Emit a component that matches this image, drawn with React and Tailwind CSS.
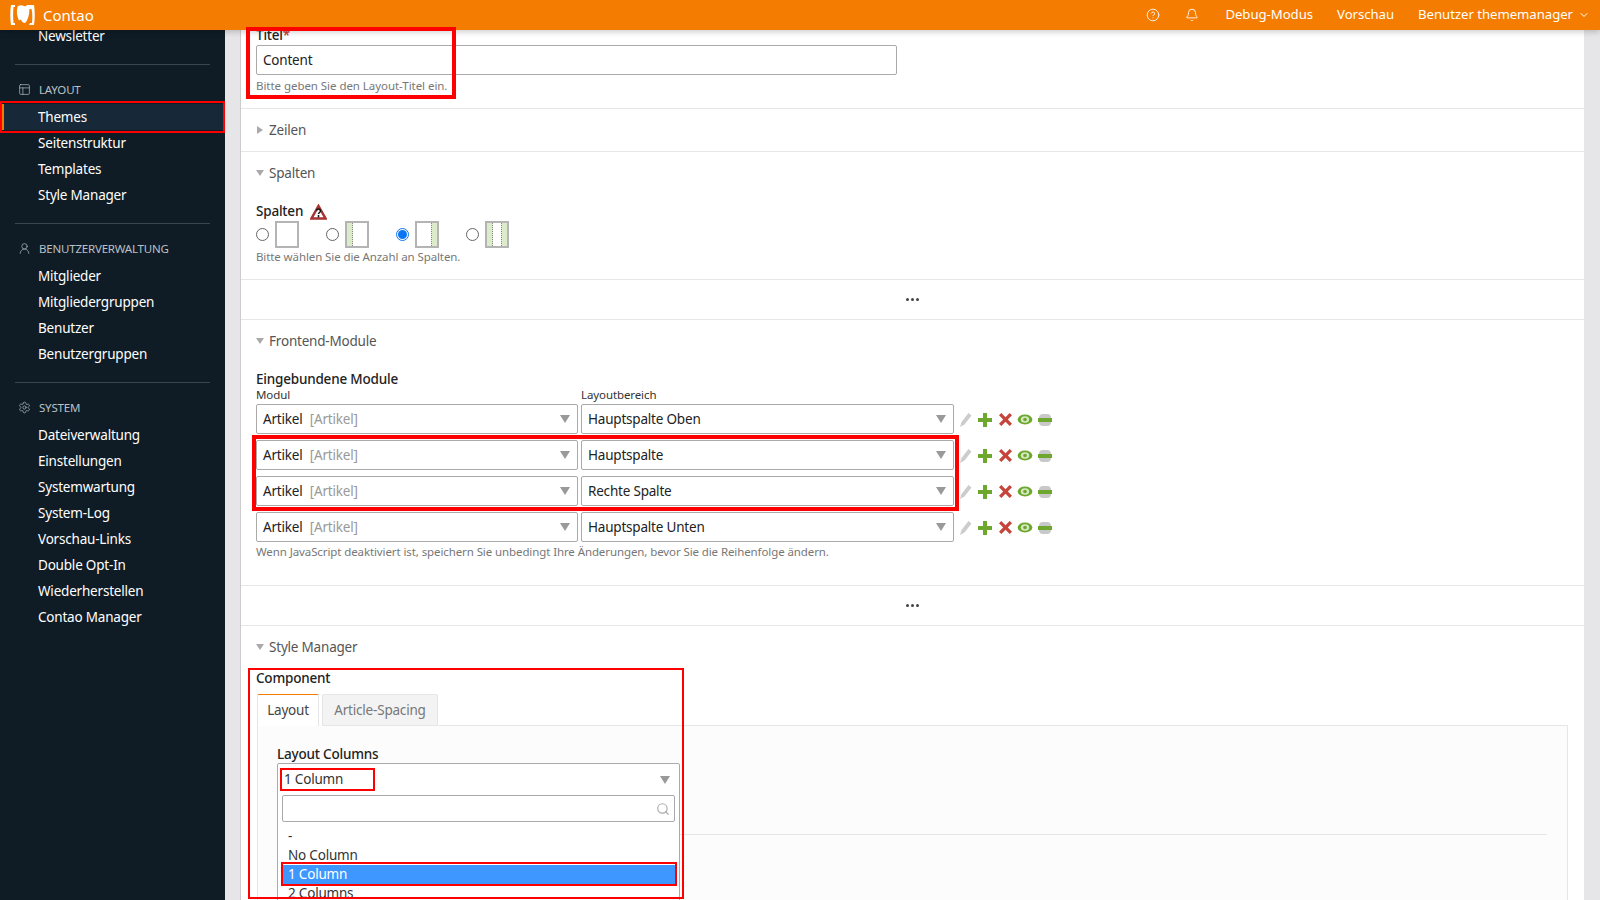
import React from 'react';
import { Bell, ChevronDown, CircleHelp, PanelsTopLeft, Search, Settings, UserRound } from 'lucide-react';

const groups = [
    { title: 'LAYOUT', icon: PanelsTopLeft, items: ['Themes', 'Seitenstruktur', 'Templates', 'Style Manager'] },
    { title: 'BENUTZERVERWALTUNG', icon: UserRound, items: ['Mitglieder', 'Mitgliedergruppen', 'Benutzer', 'Benutzergruppen'] },
    { title: 'SYSTEM', icon: Settings, items: ['Dateiverwaltung', 'Einstellungen', 'Systemwartung', 'System-Log', 'Vorschau-Links', 'Double Opt-In', 'Wiederherstellen', 'Contao Manager'] },
];

const modules = ['Hauptspalte Oben', 'Hauptspalte', 'Rechte Spalte', 'Hauptspalte Unten'];

const Caret = ({ className = '' }) => (
    <svg width="10" height="8" viewBox="0 0 10 8" className={className}>
        <path d="M0 0h10L5 8z" fill="#999" />
    </svg>
);

const Legend = ({ label, open = true }) => (
    <div className="h-[42px] flex items-center gap-[5px] text-[13.500px] text-[#555] pl-[15px]">
        <svg width="8" height="8" viewBox="0 0 8 8">
            {open ? <path d="M0 1h8L4 7z" fill="#aaa" /> : <path d="M1 0v8l6-4z" fill="#aaa" />}
        </svg>
        <span className="pt-[1px]">{label}</span>
    </div>
);

const Dots = () => (
    <div className="h-[40px] border-b border-[#e6e6e8] flex items-center justify-center gap-[2px]">
        <span className="w-[3px] h-[3px] rounded-full bg-[#444]"></span>
        <span className="w-[3px] h-[3px] rounded-full bg-[#444]"></span>
        <span className="w-[3px] h-[3px] rounded-full bg-[#444]"></span>
    </div>
);

const Select = ({ width, children }) => (
    <div className={`${width} h-[30px] border border-[#aaa] rounded-[2px] bg-white flex items-center justify-between pl-[6px] pr-[7px] text-[13.500px] text-[#222]`}>
        <span className="pt-[1px]">{children}</span>
        <Caret />
    </div>
);

const RowIcons = () => (
    <div className="flex items-center ml-[5px] mt-[1px]">
        <svg width="14" height="16" viewBox="0 0 14 16">
            <path d="M1 15l1.500-5 7-9 3 2.500-7 9z" fill="#ccc" />
        </svg>
        <svg width="14" height="14" viewBox="0 0 14 14" className="ml-[5px]">
            <path d="M5 0h4v5h5v4H9v5H5V9H0V5h5z" fill="#6ea72e" />
        </svg>
        <svg width="13" height="13" viewBox="0 0 14 14" className="ml-[7px]">
            <path d="M2.500 0L7 4.500 11.500 0 14 2.500 9.500 7l4.500 4.500L11.500 14 7 9.500 2.500 14 0 11.500 4.500 7 0 2.500z" fill="#c6443a" />
        </svg>
        <svg width="16" height="11" viewBox="0 0 17 12" className="ml-[5px]">
            <ellipse cx="8.500" cy="6" rx="8" ry="5.500" fill="#6ea72e" />
            <ellipse cx="8.500" cy="6" rx="4.500" ry="3.500" fill="#d5e8c0" />
            <circle cx="8.500" cy="6" r="2" fill="#6ea72e" />
        </svg>
        <svg width="14" height="14" viewBox="0 0 14 14" className="ml-[5px]">
            <rect x="1" y="1" width="12" height="12" rx="4" fill="#c8c8c8" />
            <rect x="0" y="5" width="14" height="4" fill="#6ea72e" />
        </svg>
    </div>
);

const ColumnOption = ({ selected, left, right }) => (
    <div className="flex items-center w-[70px]">
        <span className={`w-[13px] h-[13px] rounded-full bg-white flex items-center justify-center border ${selected ? 'border-[#0b76f5]' : 'border-[#666]'}`}>
            {selected && <span className="w-[9px] h-[9px] rounded-full bg-[#0b76f5]"></span>}
        </span>
        <span className="ml-[6px] w-[24px] h-[27px] border-2 border-[#b4b4b4] bg-white flex justify-between">
            <span className={`w-[6px] h-full ${left ? 'bg-[#dcebc9] border-r border-dotted border-[#888]' : ''}`}></span>
            <span className={`w-[6px] h-full ${right ? 'bg-[#dcebc9] border-l border-dotted border-[#888]' : ''}`}></span>
        </span>
    </div>
);

const Overlay = ({ className }) => <div className={`absolute z-30 pointer-events-none border-[#f00] ${className}`}></div>;

const App = () => {
    return (
        <div className="relative h-screen overflow-hidden flex flex-col bg-[#e6e6e8] font-['Noto_Sans',sans-serif] tracking-[-0.2px]">
            <header className="relative z-20 h-[30px] shrink-0 bg-[#f47c00] text-white flex items-center justify-between shadow-[0_2px_6px_rgba(0,0,0,0.2)]">
                <div className="flex items-center pl-[9px]">
                    <svg width="27" height="24" viewBox="0 0 27 24">
                        <path d="M2 2h4v2H4.500c-.500 5-.500 11 0 16H6v2H2C1 16 1 8 2 2z" fill="#fff" />
                        <path d="M9 3c2-1 4-1 6 0 1 .500 2 .500 3-1h2c1 5 0 13-3 17-1 1.500-3 1-4-.500-1-2-2-2-3-1C8 13 7 8 9 3z" fill="#fff" />
                        <path d="M20 2h5c1 6 1 14 0 20h-5l1-2h2c.500-5 .500-10-.500-14H20z" fill="#fff" />
                    </svg>
                    <span className="ml-[7px] text-[15px] tracking-normal">Contao</span>
                </div>
                <div className="flex items-center text-[13.200px] tracking-[-0.05px] pr-[10px]">
                    <CircleHelp size={14} strokeWidth={1.5} />
                    <Bell size={14} strokeWidth={1.5} className="ml-[25px]" />
                    <span className="ml-[26px]">Debug-Modus</span>
                    <span className="ml-[24px]">Vorschau</span>
                    <span className="ml-[24px]">Benutzer thememanager</span>
                    <ChevronDown size={12} className="ml-[5px]" />
                </div>
            </header>

            <div className="flex-1 flex min-h-0 overflow-hidden">
                <aside className="w-[225px] shrink-0 bg-[#0f1c26] text-[13.500px] text-white overflow-hidden">
                    <div className="-mt-[7px] pl-[38px] pt-[1px] h-[26px] flex items-center">Newsletter</div>
                    {groups.map((group) => (
                        <div key={group.title}>
                            <div className="mx-[15px] mt-[15px] border-t border-[#3a454e]"></div>
                            <div className="h-[25px] mt-[12px] flex items-center gap-[8px] pl-[18px] text-[11.500px] text-[#b9c0c6]">
                                <group.icon size={13} strokeWidth={1.25} />
                                <span>{group.title}</span>
                            </div>
                            <ul className="mt-[2px]">
                                {group.items.map((item) => (
                                    <li key={item} className={`h-[26px] flex items-center pt-[1px] pl-[38px] ${item === 'Themes' ? 'bg-[#172838] border-l-[4px] border-[#f47c00] !pl-[34px]' : ''}`}>
                                        {item}
                                    </li>
                                ))}
                            </ul>
                        </div>
                    ))}
                </aside>

                <main className="ml-[15px] w-[1344px] shrink-0 bg-white border-l border-[#ccc] text-[#222] overflow-hidden">
                    <section className="h-[79px] flex flex-col border-b border-[#e6e6e8] px-[15px]">
                        <div className="-mt-[5px] h-[20px] text-[13.500px] leading-[20px] font-medium">Titel<span className="text-[#c33]">*</span></div>
                        <div className="w-[641px] h-[30px] shrink-0 border border-[#aaa] rounded-[2px] flex items-center pt-[1px] px-[6px] text-[13.500px]">Content</div>
                        <p className="mt-[3px] text-[11.500px] leading-[16px] tracking-[-0.05px] text-[#777]">Bitte geben Sie den Layout-Titel ein.</p>
                    </section>

                    <section className="border-b border-[#e6e6e8]">
                        <Legend label="Zeilen" open={false} />
                    </section>

                    <section className="h-[128px] border-b border-[#e6e6e8]">
                        <Legend label="Spalten" />
                        <div className="px-[15px] mt-[7px]">
                            <div className="h-[20px] flex items-center gap-[7px] pt-[1px] text-[13.500px] font-medium">
                                Spalten
                                <svg width="17" height="16" viewBox="0 0 17 16">
                                    <path d="M8.500 2L15.500 14.500H1.500z" fill="#fff" stroke="#a33" strokeWidth="2.500" />
                                    <path d="M6.500 6.500c.500-2 4-2 4 .500 0 1.500-2 1.500-2 3M8.500 11v2.500" fill="none" stroke="#111" strokeWidth="1.500" />
                                </svg>
                            </div>
                            <div className="h-[27px] flex items-center">
                                <ColumnOption />
                                <ColumnOption left />
                                <ColumnOption selected right />
                                <ColumnOption left right />
                            </div>
                            <p className="mt-[1px] text-[11.500px] leading-[16px] tracking-[-0.1px] text-[#777]">Bitte wählen Sie die Anzahl an Spalten.</p>
                        </div>
                    </section>

                    <Dots />

                    <section className="h-[266px] border-b border-[#e6e6e8]">
                        <Legend label="Frontend-Module" />
                        <div className="px-[15px] mt-[7px]">
                            <div className="h-[20px] flex items-center pt-[1px] text-[13.500px] font-medium">Eingebundene Module</div>
                            <div className="-mt-[1px] h-[14px] flex text-[11.500px] leading-[14px] tracking-[-0.1px] text-[#333]">
                                <span className="w-[325px]">Modul</span>
                                <span>Layoutbereich</span>
                            </div>
                            <div className="mt-[2px] flex flex-col gap-[6px]">
                                {modules.map((area) => (
                                    <div key={area} className="flex items-center">
                                        <Select width="w-[322px]">
                                            Artikel <span className="text-[#999] ml-[4px]">[Artikel]</span>
                                        </Select>
                                        <div className="w-[3px]"></div>
                                        <Select width="w-[373px]">{area}</Select>
                                        <RowIcons />
                                    </div>
                                ))}
                            </div>
                            <p className="mt-[2px] text-[11.500px] leading-[16px] tracking-[-0.1px] text-[#777]">Wenn JavaScript deaktiviert ist, speichern Sie unbedingt Ihre Änderungen, bevor Sie die Reihenfolge ändern.</p>
                        </div>
                    </section>

                    <Dots />

                    <section>
                        <Legend label="Style Manager" />
                        <div className="px-[15px]">
                            <div className="h-[20px] flex items-center text-[13.500px] font-medium">Component</div>
                            <div className="mt-[6px] ml-[1px] w-[1311px] relative">
                                <div className="flex h-[32px]">
                                    <div className="w-[62px] bg-white border-t border-x border-[#e6e6e8] border-t-[#f47c00] rounded-t-[2px] flex items-center justify-center text-[13.500px] text-[#444]">Layout</div>
                                    <div className="ml-[3px] w-[116px] bg-[#f3f3f3] border border-[#e6e6e8] rounded-t-[2px] flex items-center justify-center text-[13.500px] text-[#777]">Article-Spacing</div>
                                    <div className="flex-1 border-b border-[#e6e6e8]"></div>
                                </div>
                                <div className="h-[200px] bg-[#fcfcfc] border-x border-[#e6e6e8] pl-[19px]">
                                    <div className="pt-[18px] h-[38px] flex items-center text-[13.500px] font-medium text-[#222]">Layout Columns</div>
                                    <div className="mt-[70px] mr-[20px] border-t border-[#e6e6e8]"></div>
                                </div>
                                <div className="absolute z-10 left-[20px] top-[69px] w-[403px] h-[150px] border border-[#aaa] rounded-[2px] bg-white text-[13.500px] text-[#333]">
                                    <div className="h-[31px] flex items-center justify-between pl-[6px] pr-[9px]">
                                        <span>1 Column</span>
                                        <Caret />
                                    </div>
                                    <div className="mx-[4px] h-[27px] border border-[#aaa] rounded-[2px] flex items-center justify-end pr-[4px]">
                                        <Search size={14} className="text-[#aaa]" />
                                    </div>
                                    <div className="mt-[5px] pl-[10px] h-[19px] leading-[19px]">-</div>
                                    <div className="pl-[10px] h-[19px] leading-[19px]">No Column</div>
                                    <div className="mx-[4px] pl-[6px] h-[19px] leading-[19px] bg-[#3d97ff] text-white">1 Column</div>
                                    <div className="pl-[10px] h-[19px] leading-[19px]">2 Columns</div>
                                </div>
                            </div>
                        </div>
                    </section>
                </main>
            </div>

            <Overlay className="left-[246px] top-[27px] w-[210px] h-[72px] border-[4px]" />
            <Overlay className="left-0 top-[101px] w-[225px] h-[32px] border-2" />
            <Overlay className="left-[252px] top-[435px] w-[707px] h-[76px] border-[4px]" />
            <Overlay className="left-[248px] top-[668px] w-[436px] h-[231px] border-2" />
            <Overlay className="left-[280px] top-[768px] w-[95px] h-[23px] border-2" />
            <Overlay className="left-[281px] top-[862px] w-[396px] h-[24px] border-2" />
        </div>
    );
};

export default App;
